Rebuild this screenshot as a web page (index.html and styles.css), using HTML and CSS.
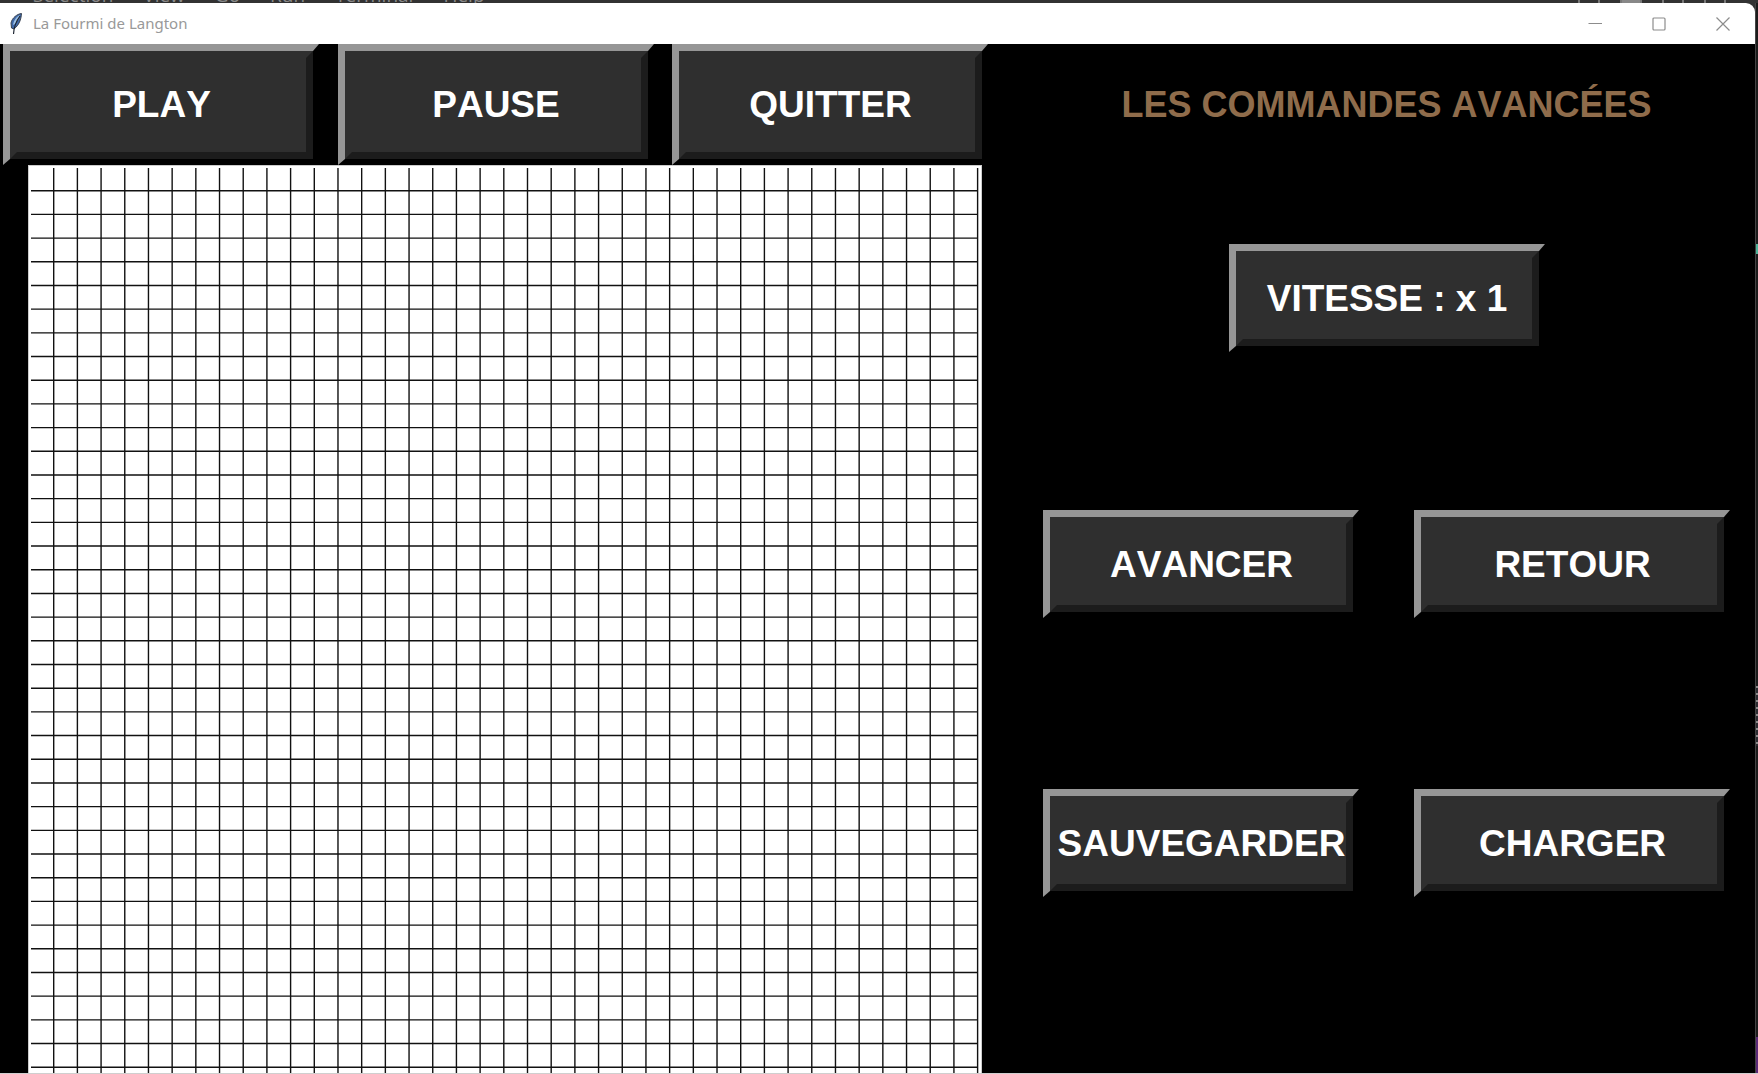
FILE: index.html
```
<!DOCTYPE html>
<html lang="fr">
<head>
<meta charset="utf-8">
<title>La Fourmi de Langton</title>
<link rel="stylesheet" href="styles.css">
</head>
<body>
<div class="desktop">
  <div class="backdrop-top" aria-hidden="true">
    <span class="menu-item">Selection</span><span class="menu-item">View</span><span class="menu-item">Go</span><span class="menu-item">Run</span><span class="menu-item">Terminal</span><span class="menu-item">Help</span>
    <span class="layout-icons"><i></i><i class="filled"></i><i></i><i></i></span>
  </div>
  <div class="window">
    <header class="titlebar">
      <svg class="feather" width="14" height="22" viewBox="0 0 14 22" aria-hidden="true">
        <path d="M12.500 .5 C8 1 3 5 2 10 L2.500 15 L5 16 C10 12 12 7 12.500 .5Z" fill="#3f68a8" stroke="#39424f" stroke-width="1"/>
        <path d="M11 2 C7 4 5 7 4 12 L6 11 C8 8 10 6 11 2Z" fill="#9cc0e4"/>
        <path d="M11 3 C8 7 5 12 4.500 21" fill="none" stroke="#1c2430" stroke-width="1.200"/>
      </svg>
      <h1 class="title">La Fourmi de Langton</h1>
      <div class="controls">
        <button class="control" aria-label="Réduire"><svg width="14" height="14" viewBox="0 0 14 14"><path d="M0.500 6.500H14"/></svg></button>
        <button class="control" aria-label="Agrandir"><svg width="14" height="14" viewBox="0 0 14 14"><rect x="1" y="1" width="12" height="12" rx="1"/></svg></button>
        <button class="control" aria-label="Fermer"><svg width="14" height="14" viewBox="0 0 14 14"><path d="M.5 .5L13.500 13.500M13.500 .5L.5 13.500"/></svg></button>
      </div>
    </header>
    <main class="content">
      <section class="board">
        <div class="toolbar">
          <button class="btn btn-tall"><span class="face">PLAY</span></button>
          <button class="btn btn-tall"><span class="face">PAUSE</span></button>
          <button class="btn btn-tall"><span class="face">QUITTER</span></button>
        </div>
        <div class="field">
          <svg class="cells" viewBox="0 0 947 947" role="img" aria-label="Grille"><path id="lines"/></svg>
        </div>
      </section>
      <section class="advanced">
        <h2 class="heading">LES COMMANDES AVANCÉES</h2>
        <div class="row row-speed"><button class="btn"><span class="face">VITESSE : x 1</span></button></div>
        <div class="row row-step">
          <button class="btn"><span class="face">AVANCER</span></button>
          <button class="btn"><span class="face">RETOUR</span></button>
        </div>
        <div class="row row-file">
          <button class="btn"><span class="face">SAUVEGARDER</span></button>
          <button class="btn"><span class="face">CHARGER</span></button>
        </div>
      </section>
    </main>
  </div>
  <div class="backdrop-side" aria-hidden="true"><span class="mark"></span><span class="code"></span><span class="status"></span></div>
</div>
<script src="grid.js"></script>
</body>
</html>
```
FILE: styles.css
```
* { box-sizing: border-box; }

body {
  margin: 0;
  background: #1e1e1e;
  font-family: "Liberation Sans", Arial, sans-serif;
}

.desktop {
  display: grid;
  grid-template-columns: 1fr 3px;
  grid-template-rows: 3px 1fr;
  height: 100vh;
  overflow: hidden;
  border-bottom: 1px solid #cfcfcf;
  background: #323232;
}

/* Editor behind the window */
.backdrop-top {
  grid-column: 1 / 3;
  display: flex;
  align-items: flex-end;
  gap: 30px;
  height: 3px;
  padding-left: 33px;
  overflow: hidden;
  background: #323232;
  color: #8a8a8a;
  font: 19px/16px "Open Sans", sans-serif;
}

.layout-icons {
  display: flex;
  gap: 20px;
  margin-left: auto;
  padding-right: 32px;
}

.layout-icons i {
  width: 22px;
  height: 3px;
  border: solid #777;
  border-width: 0 2px;
}

.layout-icons .filled { background: #888; }

.backdrop-side {
  display: flex;
  flex-direction: column;
  overflow: hidden;
  border-left: 1px solid #444;
  background: #1b1b1b;
}

.mark {
  height: 10px;
  margin-top: 241px;
  background: #4fb59b;
}

.code {
  height: 60px;
  margin-top: 432px;
  background: repeating-linear-gradient(#8a8a8a 0 2px, #2b2b30 2px 7px);
}

.status {
  height: 36px;
  margin-top: auto;
  background: #5b2a78;
}

/* Window */
.window {
  display: flex;
  flex-direction: column;
  min-height: 0;
  overflow: hidden;
  border-top-right-radius: 9px;
  background: #000;
}

.titlebar {
  display: flex;
  flex: none;
  align-items: center;
  height: 41px;
  padding-left: 9px;
  background: #fff;
}

.feather { flex: none; }

.title {
  margin: 0 0 0 10px;
  padding-bottom: 1px;
  color: #999;
  font: 400 15px/20px "Noto Sans", "Open Sans", sans-serif;
}

.controls {
  display: flex;
  margin-left: auto;
}

.control {
  display: grid;
  place-items: center;
  width: 64px;
  height: 40px;
  padding: 0;
  border: 0;
  background: none;
}

.control svg {
  fill: none;
  stroke: #8c8c8c;
  stroke-width: 1.2;
}

.content {
  display: grid;
  grid-template-columns: 988fr 767fr;
  flex: 1;
  min-height: 0;
}

.board { min-width: 0; }

.toolbar {
  display: flex;
  justify-content: space-between;
  padding-left: 3px;
}

.field {
  margin: 0 6px 0 28px;
  padding: 2px 3px 3px 2px;
  background: #fff;
  border: 1px solid #ccc;
}

.cells {
  display: block;
  width: 100%;
  overflow: visible;
}

.cells path {
  fill: none;
  stroke: #111;
  stroke-width: 1.4;
}

.advanced {
  display: flex;
  flex-direction: column;
  padding-left: 30px;
}

.heading {
  margin: 0;
  color: #8f6c4b;
  font-size: 36px;
  line-height: 122px;
  font-kerning: none;
  text-align: center;
  white-space: nowrap;
}

.row {
  display: flex;
  justify-content: center;
  gap: 55px;
}

.row-speed { margin-top: 78px; }
.row-step { margin-top: 158px; }
.row-file { margin-top: 171px; }

/* Raised button: lit top and left edges, two-step shadow on the others */
.btn {
  display: flex;
  flex: none;
  width: 316px;
  height: 108px;
  padding: 0;
  border: solid;
  border-width: 7px 6px 6px 7px;
  border-color: #969696 #000 #000 #969696;
  background: #2f2f2f;
  color: #fff;
  font: 700 37px/40px "Liberation Sans", Arial, sans-serif;
  font-kerning: none;
}

.btn-tall { height: 121px; }

.face {
  display: grid;
  place-items: center;
  align-self: stretch;
  width: 100%;
  border: 7px solid;
  border-color: #2f2f2f #1c1c1c #1c1c1c #2f2f2f;
  white-space: nowrap;
}
```
FILE: grid.js
```
// Draws the 40 x 40 cell lines of the board; the first cell is one unit short
const size = 947;
const count = 40;
const cell = 23.69;
const first = 22.7;
let d = "";
for (let i = 0; i < count; i++) {
  const p = (first + i * cell).toFixed(2);
  d += `M${p} 0V${size}M0 ${p}H${size}`;
}
document.getElementById("lines").setAttribute("d", d);
```
